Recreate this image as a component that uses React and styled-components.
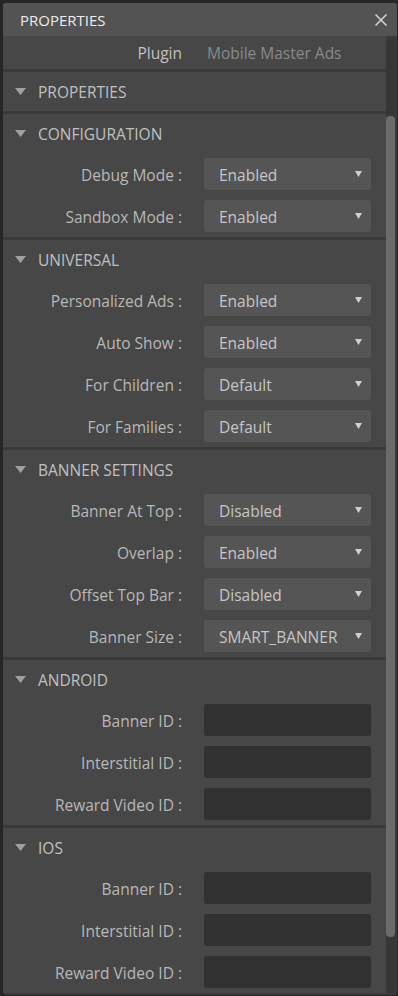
import React from 'react';
import styled, { createGlobalStyle } from 'styled-components';

const Global = createGlobalStyle`
  html, body { margin: 0; padding: 0; background: #262626; }
  body { font-family: "Open Sans", "Noto Sans", sans-serif; }
  #root { padding: 3px 1px 1px 3px; }
`;

const Panel = styled.div`
  width: 394px;
  height: 992px;
  display: flex;
  flex-direction: column;
  border-radius: 3px;
  overflow: hidden;
  background: #3a3a3a;
`;

const Header = styled.div`
  height: 33px;
  flex: none;
  display: flex;
  align-items: center;
  justify-content: space-between;
  padding: 0 10px 0 17px;
  background: #535353;
  color: #ececec;
  font-size: 15px;
`;

const Close = styled.svg`
  width: 12px;
  height: 12px;
  margin-top: 1px;
`;

const Body = styled.div`
  flex: 1;
  display: flex;
  min-height: 0;
`;

const Content = styled.div`
  width: 383px;
  display: flex;
  flex-direction: column;
  gap: 3px;
  overflow: hidden;
`;

const ScrollCol = styled.div`
  flex: 1;
  display: flex;
  padding: 3px 2px 2px 0;
`;

const Track = styled.div`
  width: 9px;
  border-radius: 4px;
  background: #363636;
  display: flex;
  flex-direction: column;
  padding: 77px 0 56px;
`;

const Thumb = styled.div`
  flex: 1;
  border-radius: 4px;
  background: #6b6b6b;
`;

const Block = styled.div`
  background: #474747;
  flex: none;
`;

const PluginRow = styled.div`
  height: 33px;
  display: grid;
  grid-template-columns: 179px 1fr;
  column-gap: 25px;
  align-items: center;
  font-size: 15.5px;
`;

const PluginLabel = styled.span`
  text-align: right;
  color: #c2c2c2;
`;

const PluginValue = styled.span`
  color: #8a8a8a;
`;

const SectionHead = styled.div`
  height: 39px;
  display: flex;
  align-items: center;
  gap: 12px;
  padding-left: 12px;
  color: #c0c0c0;
  font-size: 15.5px;
  box-sizing: border-box;
`;

const Tri = styled.svg`
  width: 11px;
  height: 7px;
  flex: none;
`;

const Rows = styled.div`
  display: flex;
  flex-direction: column;
  gap: 10px;
  padding: 5px 0 5px;
`;

const Row = styled.div`
  display: grid;
  grid-template-columns: 179px 167px;
  column-gap: 22px;
  align-items: center;
  height: 32px;
`;

const Label = styled.span`
  text-align: right;
  color: #b8b8b8;
  font-size: 15.5px;
  white-space: nowrap;
  padding-top: 1px;
`;

const Select = styled.div`
  height: 32px;
  box-sizing: border-box;
  padding: 1px 9px 0 15px;
  border-radius: 3px;
  background: #555555;
  display: flex;
  align-items: center;
  justify-content: space-between;
  color: #c6c6c6;
  font-size: 15.5px;
`;

const Arrow = styled.svg`
  width: 7px;
  height: 6px;
  margin-top: -2px;
`;

const Input = styled.div`
  height: 32px;
  border-radius: 3px;
  background: #313131;
`;

const Triangle = ({ color = '#a0a0a0' }) => (
  <Tri viewBox="0 0 11 7"><polygon points="0,0 11,0 5.5,7" fill={color} /></Tri>
);

const sections = [
  { title: 'CONFIGURATION', rows: [['Debug Mode', 'Enabled'], ['Sandbox Mode', 'Enabled']] },
  { title: 'UNIVERSAL', rows: [['Personalized Ads', 'Enabled'], ['Auto Show', 'Enabled'], ['For Children', 'Default'], ['For Families', 'Default']] },
  { title: 'BANNER SETTINGS', rows: [['Banner At Top', 'Disabled'], ['Overlap', 'Enabled'], ['Offset Top Bar', 'Disabled'], ['Banner Size', 'SMART_BANNER']] },
  { title: 'ANDROID', rows: [['Banner ID'], ['Interstitial ID'], ['Reward Video ID']] },
  { title: 'IOS', rows: [['Banner ID'], ['Interstitial ID'], ['Reward Video ID']] },
];

export default function App() {
  return (
    <>
      <Global />
      <Panel>
        <Header>
          <span>PROPERTIES</span>
          <Close viewBox="0 0 12 12">
            <path d="M0.5 0.5 L11.5 11.5 M11.5 0.5 L0.5 11.5" stroke="#d4d4d4" strokeWidth="1.5" />
          </Close>
        </Header>
        <Body>
          <Content>
            <Block>
              <PluginRow>
                <PluginLabel>Plugin</PluginLabel>
                <PluginValue>Mobile Master Ads</PluginValue>
              </PluginRow>
            </Block>
            <Block>
              <SectionHead><Triangle />PROPERTIES</SectionHead>
            </Block>
            {sections.map((s) => (
              <Block key={s.title}>
                <SectionHead><Triangle />{s.title}</SectionHead>
                <Rows>
                  {s.rows.map(([label, value]) => (
                    <Row key={label}>
                      <Label>{label} :</Label>
                      {value !== undefined ? (
                        <Select>
                          <span>{value}</span>
                          <Arrow viewBox="0 0 7 6"><polygon points="0,0 7,0 3.5,6" fill="#d0d0d0" /></Arrow>
                        </Select>
                      ) : (
                        <Input />
                      )}
                    </Row>
                  ))}
                </Rows>
              </Block>
            ))}
          </Content>
          <ScrollCol>
            <Track><Thumb /></Track>
          </ScrollCol>
        </Body>
      </Panel>
    </>
  );
}
